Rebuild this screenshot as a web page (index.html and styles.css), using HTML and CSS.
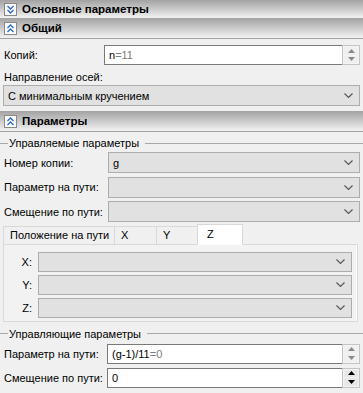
FILE: index.html
```html
<!DOCTYPE html>
<html>
<head>
<meta charset="utf-8">
<link rel="stylesheet" href="styles.css">
</head>
<body>
<div class="hdr hdr-top">
  <span class="hicon"><svg width="11" height="11" viewBox="0 0 11 11"><polyline points="2.5,2 5.5,5 8.5,2" /><polyline points="2.5,6 5.5,9 8.5,6" /></svg></span>
  <span class="htext">Основные параметры</span>
</div>
<div class="hdr hdr-line">
  <span class="hicon"><svg width="11" height="11" viewBox="0 0 11 11"><polyline points="2.5,5 5.5,2 8.5,5" /><polyline points="2.5,9 5.5,6 8.5,9" /></svg></span>
  <span class="htext">Общий</span>
</div>
<div class="section sec-common">
  <div class="row row-copies">
    <span class="lbl lbl-copies">Копий:</span>
    <div class="spin spin-copies">
      <span class="val">n<span class="dim">=11</span></span>
      <span class="spinbtns disabled">
        <span class="sb"><svg width="7" height="4" viewBox="0 0 7 4"><polygon points="0,4 3.5,0 7,4"/></svg></span>
        <span class="sb"><svg width="7" height="4" viewBox="0 0 7 4"><polygon points="0,0 3.5,4 7,0"/></svg></span>
      </span>
    </div>
  </div>
  <div class="lbl lbl-block">Направление осей:</div>
  <div class="combo combo-full"><span class="val">С минимальным кручением</span><svg class="chev" width="9" height="5" viewBox="0 0 9 5"><polyline points="0.5,0.5 4.5,4.5 8.5,0.5"/></svg></div>
</div>
<div class="hdr hdr-line hdr-params">
  <span class="hicon"><svg width="11" height="11" viewBox="0 0 11 11"><polyline points="2.5,5 5.5,2 8.5,5" /><polyline points="2.5,9 5.5,6 8.5,9" /></svg></span>
  <span class="htext">Параметры</span>
</div>
<div class="group g1">
  <div class="gtitle"><span>Управляемые параметры</span></div>
  <div class="row grow">
    <span class="lbl">Номер копии:</span>
    <div class="combo combo-g"><span class="val">g</span><svg class="chev" width="9" height="5" viewBox="0 0 9 5"><polyline points="0.5,0.5 4.5,4.5 8.5,0.5"/></svg></div>
  </div>
  <div class="row grow">
    <span class="lbl">Параметр на пути:</span>
    <div class="combo combo-g"><span class="val"></span><svg class="chev" width="9" height="5" viewBox="0 0 9 5"><polyline points="0.5,0.5 4.5,4.5 8.5,0.5"/></svg></div>
  </div>
  <div class="row grow">
    <span class="lbl">Смещение по пути:</span>
    <div class="combo combo-g"><span class="val"></span><svg class="chev" width="9" height="5" viewBox="0 0 9 5"><polyline points="0.5,0.5 4.5,4.5 8.5,0.5"/></svg></div>
  </div>
  <div class="tabs">
    <div class="tabbar">
      <span class="tab t1">Положение на пути</span>
      <span class="tab t2">X</span>
      <span class="tab t3">Y</span>
      <span class="tab tsel">Z</span>
    </div>
    <div class="pane">
      <div class="prow"><span class="plbl">X:</span><div class="combo combo-p"><span class="val"></span><svg class="chev" width="9" height="5" viewBox="0 0 9 5"><polyline points="0.5,0.5 4.5,4.5 8.5,0.5"/></svg></div></div>
      <div class="prow"><span class="plbl">Y:</span><div class="combo combo-p"><span class="val"></span><svg class="chev" width="9" height="5" viewBox="0 0 9 5"><polyline points="0.5,0.5 4.5,4.5 8.5,0.5"/></svg></div></div>
      <div class="prow"><span class="plbl">Z:</span><div class="combo combo-p"><span class="val"></span><svg class="chev" width="9" height="5" viewBox="0 0 9 5"><polyline points="0.5,0.5 4.5,4.5 8.5,0.5"/></svg></div></div>
    </div>
  </div>
</div>
<div class="group g2">
  <div class="gtitle"><span>Управляющие параметры</span></div>
  <div class="row srow">
    <span class="lbl">Параметр на пути:</span>
    <div class="spin spin-g">
      <span class="val">(g-1)/11<span class="dim">=0</span></span>
      <span class="spinbtns disabled">
        <span class="sb"><svg width="7" height="4" viewBox="0 0 7 4"><polygon points="0,4 3.5,0 7,4"/></svg></span>
        <span class="sb"><svg width="7" height="4" viewBox="0 0 7 4"><polygon points="0,0 3.5,4 7,0"/></svg></span>
      </span>
    </div>
  </div>
  <div class="row srow">
    <span class="lbl">Смещение по пути:</span>
    <div class="spin spin-g">
      <span class="val">0</span>
      <span class="spinbtns">
        <span class="sb"><svg width="7" height="4" viewBox="0 0 7 4"><polygon points="0,4 3.5,0 7,4"/></svg></span>
        <span class="sb"><svg width="7" height="4" viewBox="0 0 7 4"><polygon points="0,0 3.5,4 7,0"/></svg></span>
      </span>
    </div>
  </div>
</div>
</body>
</html>
```
FILE: styles.css
```css
* { box-sizing: border-box; }
html, body { margin: 0; padding: 0; }
body {
  width: 363px;
  height: 393px;
  overflow: hidden;
  background: #f0f0f0;
  font-family: "Liberation Sans", Arial, sans-serif;
  font-size: 11px;
  color: #000;
  white-space: nowrap;
}
.hdr {
  display: flex;
  align-items: center;
  height: 18px;
  padding-left: 4px;
  background: linear-gradient(#a2a2a2, #f2f2f2);
}
.hdr-line {
  height: 21px;
  border-bottom: 1px solid #a0a0a0;
}
.hicon {
  width: 13px;
  height: 13px;
  border: 1px solid #8a8a8a;
  background: #fbfbfb;
  display: flex;
  align-items: center;
  justify-content: center;
}
.hicon svg polyline {
  fill: none;
  stroke: #2c6cc4;
  stroke-width: 1.4;
}
.htext {
  margin-left: 5px;
  font-weight: bold;
  font-size: 11.5px;
}
.section { padding: 0 3px 0 3px; }
.sec-common { padding-top: 6px; padding-bottom: 5px; }
.row {
  display: flex;
  align-items: center;
  justify-content: space-between;
}
.lbl { padding-left: 1px; flex-shrink: 0; }
.lbl-block { margin-top: 5px; height: 15px; line-height: 15px; }
.val { padding-left: 4px; white-space: pre; }
.dim { color: #7c7c7c; }
.combo {
  display: flex;
  align-items: center;
  justify-content: space-between;
  height: 21px;
  background: #e1e1e1;
  border: 1px solid #adadad;
  padding-right: 6px;
  flex-shrink: 0;
}
.combo-full { width: 357px; }
.chev polyline { fill: none; stroke: #555; stroke-width: 1.1; }
.spin {
  display: flex;
  align-items: center;
  justify-content: space-between;
  height: 20px;
  background: #fff;
  border: 1px solid #7a7a7a;
  border-right: none;
  flex-shrink: 0;
}
.spin-copies { width: 256px; }
.spinbtns {
  display: flex;
  flex-direction: column;
  align-self: stretch;
  width: 18px;
  margin-top: -1px;
  margin-bottom: -1px;
  border: 1px solid #c4c4c4;
  background: #f4f4f4;
  padding: 1px;
  gap: 1px;
}
.sb {
  flex: 1;
  display: flex;
  align-items: center;
  justify-content: center;
  background: #e8e8e8;
}
.sb svg polygon { fill: #000; }
.spinbtns.disabled .sb svg polygon { fill: #8a8a8a; }
.spinbtns.disabled .sb { background: #f0f0f0; }
.group { padding: 0 3px 0 0; }
.gtitle {
  display: flex;
  align-items: center;
  height: 14px;
}
.gtitle::before {
  content: "";
  width: 8px;
  height: 1px;
  background: #a8a8a8;
  margin-right: 1px;
}
.gtitle::after {
  content: "";
  flex: 1;
  height: 1px;
  background: #a8a8a8;
  margin-left: 6px;
  margin-right: -3px;
}
.g1 { margin-top: 4px; }
.g1 .gtitle { margin-bottom: 2px; }
.grow { padding-left: 3px; margin-bottom: 3.5px; }
.combo-g { width: 252px; }
.tabs { margin-left: 3px; margin-top: -2px; margin-right: 2px; }
.tabbar {
  display: flex;
  align-items: flex-end;
  height: 20px;
}
.tab {
  height: 18px;
  line-height: 16px;
  border: 1px solid #d9d9d9;
  border-bottom: none;
  border-right: none;
  padding-left: 6px;
  background: #f0f0f0;
  flex-shrink: 0;
}
.t1 { width: 111px; }
.t2 { width: 42px; }
.t3 { width: 41px; }
.tsel {
  width: 46px;
  height: 21px;
  margin-bottom: -1px;
  line-height: 19px;
  background: #fff;
  border: 1px solid #d9d9d9;
  border-bottom: none;
  padding-left: 9px;
  position: relative;
  z-index: 1;
}
.pane {
  border: 1px solid #d9d9d9;
  background: #f2f2f2;
  box-shadow: inset -1px 0 0 #fff;
  height: 78px;
  padding: 7px 5px 0 0;
}
.prow {
  display: flex;
  align-items: center;
  justify-content: flex-end;
  margin-bottom: 3px;
}
.plbl { margin-right: 6px; }
.combo-p { width: 314px; height: 20px; }
.g2 { margin-top: 5px; }
.g2 .gtitle { margin-bottom: 3px; }
.srow { padding-left: 3px; margin-bottom: 4px; }
.spin-g { width: 253px; }
```
